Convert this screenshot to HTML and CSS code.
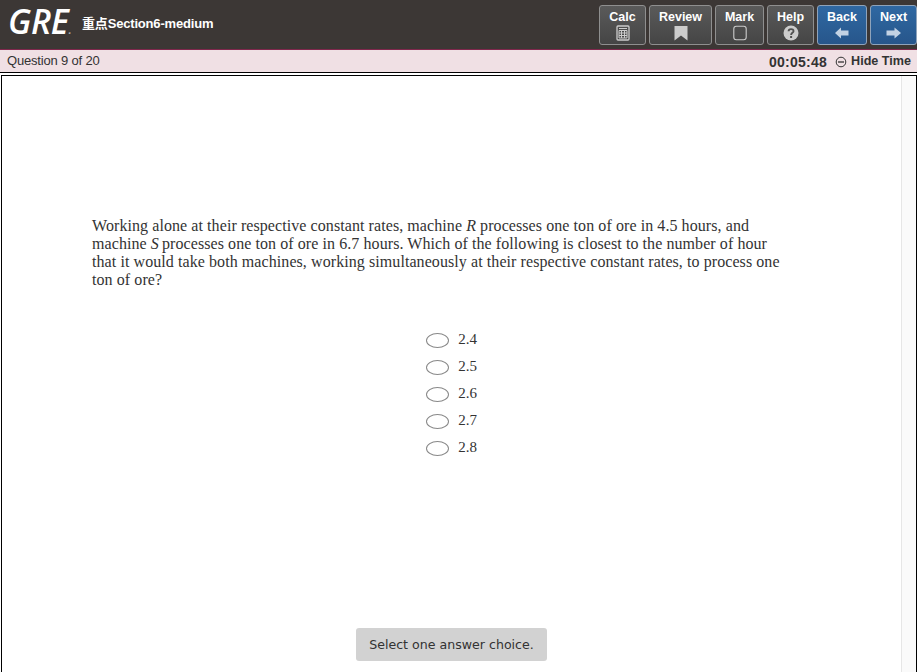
FILE: index.html
```html
<!DOCTYPE html>
<html lang="en">
<head>
<meta charset="utf-8">
<title>GRE Practice</title>
<link rel="stylesheet" href="styles.css">
</head>
<body>
<header class="header">
  <div class="logo">GRE<span class="logo-dot">.</span></div>
  <h1 class="title">重点Section6-medium</h1>
  <nav class="tools">
    <button class="tool calc"><span>Calc</span>
      <svg width="14" height="16" viewBox="0 0 14 16"><rect x="1" y="1" width="12" height="14" rx="1" fill="none" stroke="#ccc" stroke-width="1.3"/><path d="M3 3.5h8M3 5.5h8v7.500H3zM3 8h8M3 10.500h8M5.500 5.500V13M8.500 5.500V13" fill="none" stroke="#ccc"/></svg>
    </button>
    <button class="tool review"><span>Review</span>
      <svg width="14" height="16" viewBox="0 0 14 16"><path d="M.5 1h13v14.500L7 10.500.5 15.500z" fill="#ccc"/></svg>
    </button>
    <button class="tool mark"><span>Mark</span>
      <svg width="14" height="16" viewBox="0 0 14 16"><rect x=".8" y="1.300" width="12.400" height="13.400" rx="2.500" fill="none" stroke="#ccc" stroke-width="1.100"/></svg>
    </button>
    <button class="tool help"><span>Help</span>
      <svg width="16" height="16" viewBox="0 0 16 16"><circle cx="8" cy="8" r="7.500" fill="#ccc"/><path d="M5.600 6.300C5.600 3.300 10.600 3.400 10.500 6.200 10.400 7.900 8.100 7.900 8.100 10" fill="none" stroke="#505050" stroke-width="1.900"/><rect x="7.100" y="11" width="2" height="2" fill="#505050"/></svg>
    </button>
    <button class="tool blue back"><span>Back</span>
      <svg width="14" height="16" viewBox="0 0 14 16"><path d="M0 8 6 2.500V5.500h7.500v5H6v3z" fill="#c3d2e3"/></svg>
    </button>
    <button class="tool blue next"><span>Next</span>
      <svg width="16" height="16" viewBox="0 0 16 16"><path d="M15 8 8.500 2.500v3H.5v5h8v3z" fill="#c3d2e3"/></svg>
    </button>
  </nav>
</header>
<div class="status">
  <span class="progress">Question 9 of 20</span>
  <span class="timer">00:05:48</span>
  <svg class="minus" width="12" height="12" viewBox="0 0 12 12"><circle cx="6" cy="6" r="4.800" fill="none" stroke="#333" stroke-width="1"/><path d="M3 6h6" stroke="#333" stroke-width="1.300"/></svg>
  <span class="hide">Hide Time</span>
</div>
<main class="frame">
  <div class="content">
    <p class="question">
      <span class="line">Working alone at their respective constant rates, machine <i>R</i> processes one ton of ore in 4.5 hours, and</span>
      <span class="line">machine <i class="tight">S</i> processes one ton of ore in 6.7 hours. Which of the following is closest to the number of hour</span>
      <span class="line">that it would take both machines, working simultaneously at their respective constant rates, to process one</span>
      <span class="line">ton of ore?</span>
    </p>
    <ul class="choices">
      <li><span class="oval"></span><span>2.4</span></li>
      <li><span class="oval"></span><span>2.5</span></li>
      <li><span class="oval"></span><span>2.6</span></li>
      <li><span class="oval"></span><span>2.7</span></li>
      <li><span class="oval"></span><span>2.8</span></li>
    </ul>
    <div class="hint">Select one answer choice.</div>
  </div>
  <div class="scrollbar"></div>
</main>
</body>
</html>
```
FILE: styles.css
```css
* { box-sizing: border-box; }
body {
  margin: 0;
  height: 672px;
  overflow: hidden;
  display: flex;
  flex-direction: column;
  background: #fff;
  color: #333;
  font-family: "Liberation Sans", "Noto Sans CJK SC", sans-serif;
}
.header {
  height: 50px;
  flex: none;
  display: flex;
  align-items: flex-start;
  background: #3c3735;
  border-bottom: 1px solid #80284d;
  color: #fff;
}
.logo {
  width: 74px;
  padding-left: 8px;
  font: italic 600 34px/43px "Open Sans", sans-serif;
  letter-spacing: -0.3px;
  white-space: nowrap;
}
.logo-dot { font-size: 12px; letter-spacing: 0; color: #aaa; }
.title {
  margin: 0 0 0 8px;
  font-size: 13px;
  line-height: 47px;
  font-weight: bold;
  letter-spacing: -0.18px;
  white-space: nowrap;
}
.tools { display: flex; gap: 3px; margin: 5px 0 0 auto; }
.tool {
  height: 40px;
  padding: 3px 0 0;
  display: flex;
  flex-direction: column;
  align-items: center;
  border: 1px solid #8f8f8f;
  border-radius: 3px;
  background: linear-gradient(#5a5a5a, #454545);
  color: #fff;
  font: bold 12.5px/16px "Liberation Sans", sans-serif;
}
.tool svg { display: block; }
.tool.calc svg, .tool.review svg, .tool.mark svg { margin-top: 0; }
.blue { background: linear-gradient(#2f68a2, #27568b); border-color: #8fa3ba; }
.calc, .help { width: 47px; }
.review { width: 63px; }
.mark { width: 49px; }
.back { width: 50px; }
.next { width: 47px; }
.status {
  height: 23px;
  flex: none;
  display: flex;
  align-items: flex-start;
  padding: 0 6px 0 7px;
  background: #f0e0e4;
  border-bottom: 1px solid #000;
  line-height: 22px;
}
.progress { font-size: 13px; letter-spacing: -0.18px; margin-right: auto; }
.timer { font-size: 14px; line-height: 24px; font-weight: bold; letter-spacing: 0.25px; }
.minus { margin: 6px 4px 0 8px; }
.hide { font-size: 12.6px; font-weight: bold; }
.frame {
  flex: 1;
  display: flex;
  margin: 2px 0 0 1px;
  border: 1px solid #000;
  border-bottom: 0;
}
.content {
  flex: 1;
  display: flex;
  flex-direction: column;
  align-items: center;
  padding: 141px 0 11px;
}
.question {
  margin: 0;
  align-self: flex-start;
  padding-left: 90px;
  font: 16px/18px "Liberation Serif", serif;
  letter-spacing: 0.077px;
}
.line { display: block; width: max-content; white-space: nowrap; }
.tight { margin-right: -1px; }
.choices {
  margin: 37px 0 0;
  padding: 0;
  list-style: none;
  font: 15px/27px "Liberation Serif", serif;
}
.choices li { display: flex; align-items: flex-start; height: 27px; gap: 9px; }
.oval {
  width: 23px;
  height: 15px;
  margin-top: 7px;
  border: 1px solid #888;
  border-radius: 50%;
}
.hint {
  margin-top: auto;
  width: 191px;
  height: 33px;
  border-radius: 3px;
  background: #d2d2d2;
  text-align: center;
  font: 12.6px/33px "DejaVu Sans", sans-serif;
  white-space: nowrap;
}
.scrollbar { width: 15px; border-left: 1px solid #e6e6e6; background: #fafafa; }
```
